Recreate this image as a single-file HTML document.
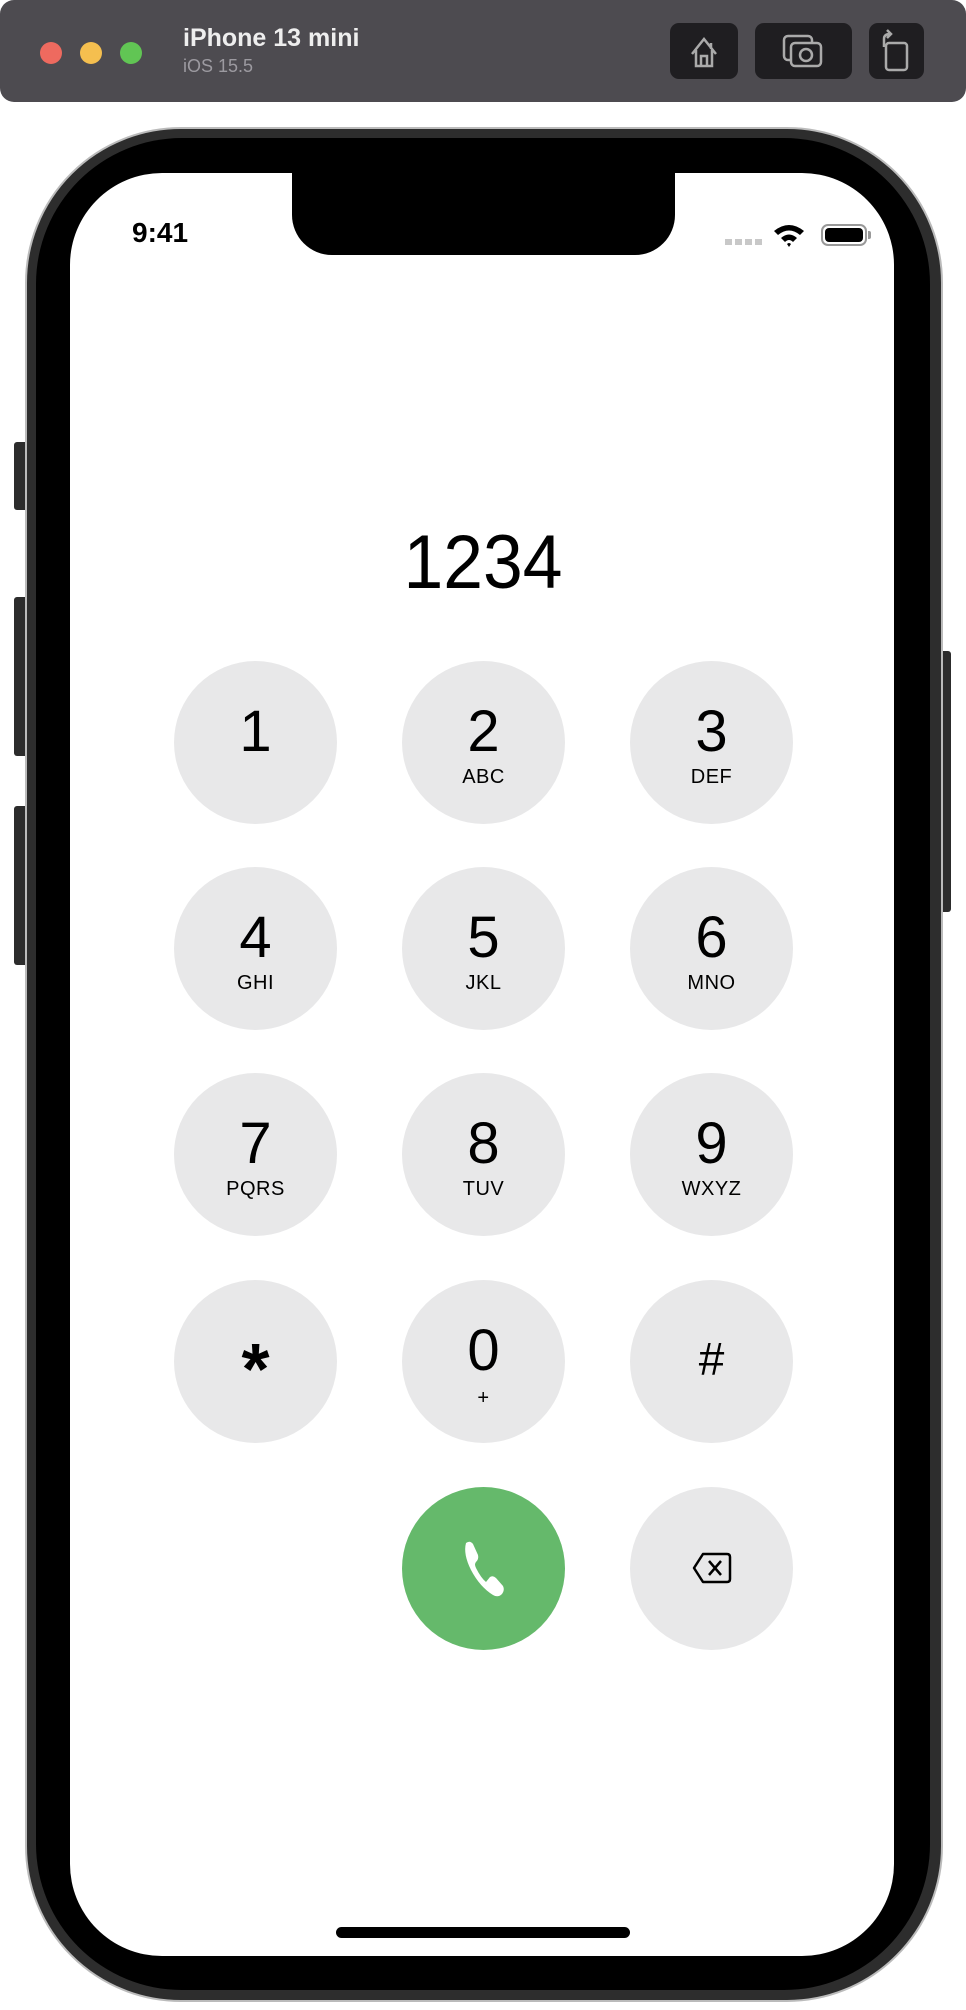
<!DOCTYPE html>
<html><head><meta charset="utf-8"><style>
*{margin:0;padding:0;box-sizing:border-box}
body{width:966px;height:2010px;background:#fff;position:relative;overflow:hidden;font-family:"Liberation Sans",sans-serif}
.a{position:absolute}
.bar{left:0;top:0;width:966px;height:102px;background:#4d4b50;border-radius:14px}
.tl{width:22px;height:22px;border-radius:50%;top:42px}
.tb{background:#1f1e21;border-radius:9px;top:23px;height:56px}
.key{width:163px;height:163px;border-radius:50%;background:#e8e8e9;text-align:center}
.d{position:absolute;left:0;right:0;font-size:58px;line-height:1;color:#000}
.l{position:absolute;left:0;right:0;font-size:20px;line-height:1;color:#000;letter-spacing:0.5px}
</style></head><body>
<div class="a bar"></div>
<div class="a tl" style="left:40px;background:#ee6a5f"></div>
<div class="a tl" style="left:80px;background:#f5bf4f"></div>
<div class="a tl" style="left:120px;background:#61c554"></div>
<div class="a" style="left:183px;top:24px;color:#eee;font-weight:bold;font-size:25px">iPhone 13 mini</div>
<div class="a" style="left:183px;top:56px;color:#9c9aa0;font-size:18px">iOS 15.5</div>
<div class="a tb" style="left:670px;width:68px"><svg width="68" height="56" viewBox="0 0 68 56"><path d="M22 31 L34 16 L46 31 M26 27 V43 H42 V27 M31 43 V33 H37 V43 M41 20 V26" fill="none" stroke="#aaa" stroke-width="2.5"/></svg></div>
<div class="a tb" style="left:755px;width:97px"><svg width="97" height="56" viewBox="0 0 97 56"><rect x="29" y="13" width="28" height="24" rx="4" fill="none" stroke="#aaa" stroke-width="2.5"/><rect x="36" y="20" width="30" height="23" rx="4" fill="#1f1e21" stroke="#aaa" stroke-width="2.5"/><circle cx="51" cy="32" r="6" fill="none" stroke="#aaa" stroke-width="2.5"/></svg></div>
<div class="a tb" style="left:869px;width:55px"><svg width="55" height="56" viewBox="0 0 55 56"><rect x="17" y="20" width="21" height="27" rx="3" fill="none" stroke="#aaa" stroke-width="2.5"/><path d="M15 24 V16 Q15 11 21 11 M18 7 L22 11 L18 15" fill="none" stroke="#aaa" stroke-width="2.5"/></svg></div>

<div class="a" style="left:14px;top:442px;width:14px;height:68px;background:#2c2c2c;border-radius:3px"></div>
<div class="a" style="left:14px;top:597px;width:14px;height:159px;background:#2c2c2c;border-radius:3px"></div>
<div class="a" style="left:14px;top:806px;width:14px;height:159px;background:#2c2c2c;border-radius:3px"></div>
<div class="a" style="left:938px;top:651px;width:13px;height:261px;background:#2c2c2c;border-radius:3px"></div>
<div class="a" style="left:25px;top:127px;width:918px;height:1875px;border-radius:156px;background:#2d2d2d;border:2px solid #bbb"></div>
<div class="a" style="left:36px;top:138px;width:894px;height:1852px;border-radius:146px;background:#000"></div>
<div class="a" style="left:70px;top:173px;width:824px;height:1783px;border-radius:92px;background:#fff"></div>
<div class="a" style="left:292px;top:170px;width:383px;height:85px;background:#000;border-radius:0 0 40px 40px"></div>

<div class="a" style="left:132px;top:217px;font-size:28px;font-weight:bold">9:41</div>
<div class="a" style="left:725px;top:239px;width:38px;height:6px;background:repeating-linear-gradient(90deg,#c8c8c8 0 7px,transparent 7px 10px)"></div>
<svg class="a" style="left:772px;top:222px" width="34" height="26" viewBox="0 0 34 26"><path d="M2 9 Q17 -3 32 9 L28 13 Q17 4 6 13 Z M9 16 Q17 9 25 16 L21 20 Q17 16 13 20 Z M15 22 Q17 20 19 22 L17 25 Z" fill="#000"/></svg>
<div class="a" style="left:821px;top:224px;width:46px;height:22px;border:2px solid #999;border-radius:7px;padding:2px"><div style="width:100%;height:100%;background:#000;border-radius:4px"></div></div>
<div class="a" style="left:868px;top:231px;width:3px;height:8px;background:#999;border-radius:0 2px 2px 0"></div>

<div class="a" style="left:0;width:966px;top:525px;text-align:center;font-size:76px;line-height:1;transform:scaleX(0.94)">1234</div>

<div class="a key" style="left:174px;top:661px"><div class="d" style="top:42px">1</div></div>
<div class="a key" style="left:402px;top:661px"><div class="d" style="top:42px">2</div><div class="l" style="top:106px">ABC</div></div>
<div class="a key" style="left:630px;top:661px"><div class="d" style="top:42px">3</div><div class="l" style="top:106px">DEF</div></div>
<div class="a key" style="left:174px;top:867px"><div class="d" style="top:42px">4</div><div class="l" style="top:106px">GHI</div></div>
<div class="a key" style="left:402px;top:867px"><div class="d" style="top:42px">5</div><div class="l" style="top:106px">JKL</div></div>
<div class="a key" style="left:630px;top:867px"><div class="d" style="top:42px">6</div><div class="l" style="top:106px">MNO</div></div>
<div class="a key" style="left:174px;top:1073px"><div class="d" style="top:42px">7</div><div class="l" style="top:106px">PQRS</div></div>
<div class="a key" style="left:402px;top:1073px"><div class="d" style="top:42px">8</div><div class="l" style="top:106px">TUV</div></div>
<div class="a key" style="left:630px;top:1073px"><div class="d" style="top:42px">9</div><div class="l" style="top:106px">WXYZ</div></div>
<div class="a key" style="left:174px;top:1280px"><div class="d" style="top:54px;font-size:72px;font-weight:bold">*</div></div>
<div class="a key" style="left:402px;top:1280px"><div class="d" style="top:42px">0</div><div class="l" style="top:108px">+</div></div>
<div class="a key" style="left:630px;top:1280px"><div class="d" style="top:56px;font-size:46px">#</div></div>
<div class="a key" style="left:402px;top:1487px;background:#65b96b"><svg style="margin-top:53px" width="56" height="58" viewBox="0 0 56 58"><path d="M10 3 Q14 0 17 4 L22 15 Q23 19 20 22 Q18 24 20 28 Q25 38 30 42 L34 37 Q37 35 40 38 L47 46 Q49 50 46 54 Q42 58 37 55 Q24 47 15 30 Q7 14 10 3 Z" fill="#fff"/></svg></div>
<div class="a key" style="left:630px;top:1487px"><svg style="margin-top:64px" width="44" height="34" viewBox="0 0 44 34"><path d="M13 3 H37 Q40 3 40 6 V28 Q40 31 37 31 H13 L4 17 Z" fill="none" stroke="#000" stroke-width="2.5" stroke-linejoin="round"/><path d="M19 10 L31 24 M31 10 L19 24" stroke="#000" stroke-width="2.5"/></svg></div>

<div class="a" style="left:336px;top:1927px;width:294px;height:11px;background:#000;border-radius:6px"></div>
</body></html>
